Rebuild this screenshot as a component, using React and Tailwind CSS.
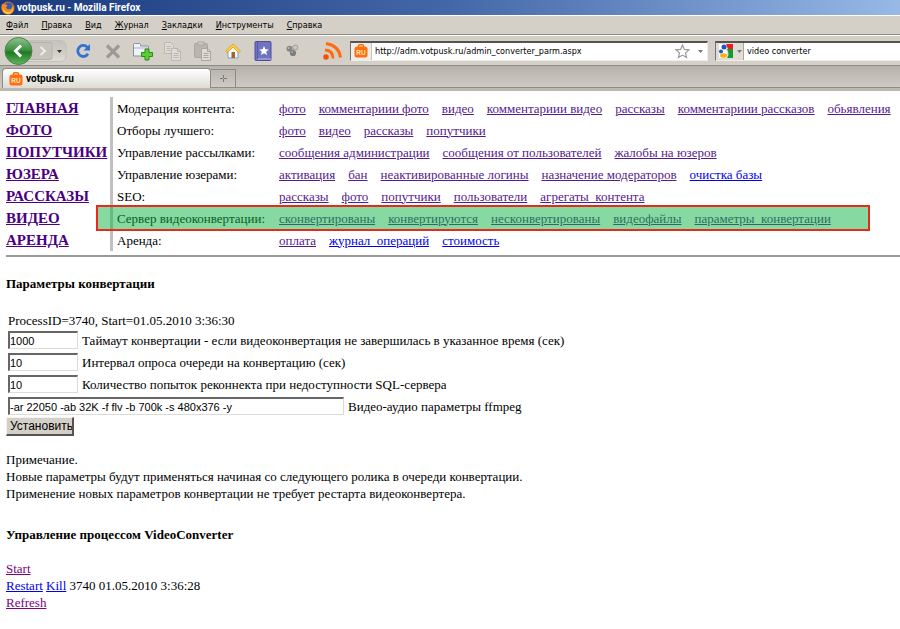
import { useState } from "react";
import clsx from "clsx";

const MENU = ["Файл", "Правка", "Вид", "Журнал", "Закладки", "Инструменты", "Справка"];

const SECTIONS = ["ГЛАВНАЯ", "ФОТО", "ПОПУТЧИКИ", "ЮЗЕРА", "РАССКАЗЫ", "ВИДЕО", "АРЕНДА"];

const ROWS = [
  {
    title: "Модерация контента:",
    links: ["фото", "комментариии фото", "видео", "комментариии видео", "рассказы", "комментариии рассказов", "обьявления"],
  },
  { title: "Отборы лучшего:", links: ["фото", "видео", "рассказы", "попутчики"] },
  {
    title: "Управление рассылками:",
    links: ["сообщения администрации", "сообщения от пользователей", "жалобы на юзеров"],
  },
  {
    title: "Управление юзерами:",
    links: ["активация", "бан", "неактивированные логины", "назначение модераторов", "очистка базы"],
    fresh: ["очистка базы"],
  },
  { title: "SEO:", links: ["рассказы", "фото", "попутчики", "пользователи", "агрегаты_контента"] },
  {
    title: "Сервер видеоконвертации:",
    links: ["сконвертированы", "конвертируются", "несконвертированы", "видеофайлы", "параметры_конвертации"],
    active: true,
  },
  {
    title: "Аренда:",
    links: ["оплата", "журнал_операций", "стоимость"],
    fresh: ["журнал_операций", "стоимость"],
  },
];

const FIELDS = [
  { id: "timeout", value: "1000", label: "Таймаут конвертации - если видеоконвертация не завершилась в указанное время (сек)" },
  { id: "interval", value: "10", label: "Интервал опроса очереди на конвертацию (сек)" },
  { id: "retries", value: "10", label: "Количество попыток реконнекта при недоступности SQL-сервера" },
  { id: "ffmpeg", value: "-ar 22050 -ab 32K -f flv -b 700k -s 480x376 -y", label: "Видео-аудио параметры ffmpeg", wide: true },
];

function FirefoxLogo() {
  return (
    <svg width="14" height="14" viewBox="0 0 14 14" aria-hidden="true">
      <circle cx="7" cy="7" r="6.5" fill="#e8701a" />
      <circle cx="7.6" cy="5.6" r="4.2" fill="#2c5fb8" />
      <path d="M1 3c1 .4 1.500 .4 2.500 .3C5 3.400 6 4 6.800 4.800L5 6c.3 1.800 2 2.800 4 2.200 1.500-.5 2.500-2 2.200-4.200 2 2 2.300 5.200.3 7.400C9 14 4 14 1.800 10.800.3 8.500.2 5.500 1 3z" fill="#f58a1f" />
      <path d="M2 6c.2 3.500 3.200 5.500 6 5 2.200-.4 3.800-2 4-4.500.8 3-1 6-4.300 6.500C4 13.400 1.200 10.500 2 6z" fill="#fcc73a" />
    </svg>
  );
}

function SiteIcon() {
  return (
    <svg width="14" height="14" viewBox="0 0 14 14" aria-hidden="true" className="shrink-0">
      <path d="M4.500 3.500V1.700q0-1 1-1h3q1 0 1 1v1.800" fill="none" stroke="#ff6a00" strokeWidth="1.400" />
      <rect x="0.500" y="2.500" width="13" height="11" rx="2.500" fill="#ff6f0a" />
      <text x="7" y="10.500" textAnchor="middle" fontSize="6.500" fontWeight="bold" fill="#ffe2c8" fontFamily="Liberation Sans, sans-serif">
        RU
      </text>
    </svg>
  );
}

function Caret({ className }) {
  return (
    <svg width="5" height="3" viewBox="0 0 5 3" aria-hidden="true" className={className}>
      <path d="M0 0h5L2.500 3z" fill="currentColor" />
    </svg>
  );
}

function NavButtons() {
  return (
    <svg width="64" height="30" viewBox="0 0 64 30" aria-hidden="true">
      <defs>
        <linearGradient id="back" x1="0" y1="0" x2="0" y2="1">
          <stop offset="0" stopColor="#8fc48d" />
          <stop offset="0.45" stopColor="#3f9342" />
          <stop offset="0.55" stopColor="#1f7a26" />
          <stop offset="1" stopColor="#5fb85a" />
        </linearGradient>
        <linearGradient id="fwd" x1="0" y1="0" x2="0" y2="1">
          <stop offset="0" stopColor="#c4c2bc" />
          <stop offset="0.5" stopColor="#cfccc6" />
          <stop offset="1" stopColor="#e0ddd7" />
        </linearGradient>
      </defs>
      <path d="M16 4.500h40q6 0 6 6v9q0 6-6 6H16z" fill="url(#fwd)" stroke="#c3c0b9" />
      <path d="M26 6.500h20q2 0 2 2v13q0 2-2 2H26z" fill="#c6c3bd" stroke="#b5b2ab" />
      <path d="M36.500 11l4.500 4-4.500 4" fill="none" stroke="#ecebe8" strokeWidth="2.200" />
      <circle cx="14.500" cy="15" r="13.500" fill="url(#back)" stroke="#4d7f4d" />
      <path d="M17 9.500L11.500 15l5.500 5.500" fill="none" stroke="#fff" strokeWidth="3" />
      <path d="M53 14h5l-2.500 3z" fill="#333" />
    </svg>
  );
}

function ToolIcon({ name }) {
  return (
    <svg width="20" height="20" viewBox="0 0 20 20" aria-hidden="true">
      {name === "reload" && (
        <>
          <path d="M14.300 6.200A5.500 5.500 0 1 0 15 12.800" fill="none" stroke="#2f72d4" strokeWidth="2.800" />
          <path d="M17 3v6.500h-6.500z" fill="#2f72d4" />
        </>
      )}
      {name === "stop" && <path d="M4 4.500l12 12M16 4.500l-12 12" stroke="#9b9a97" strokeWidth="3.200" />}
      {name === "newtab" && (
        <>
          <path d="M0.500 3.500q0-1 1-1h5q1 0 1 1v1.500h7q1 0 1 1v9h-15z" fill="#eef3f9" stroke="#8b9199" />
          <path d="M1 6h14v2H1z" fill="#c6d4e6" />
          <path d="M12 8h4v3.500h3.500v4H16V19h-4v-3.500H8.500v-4H12z" fill="#59cf35" stroke="#2d8a1a" />
        </>
      )}
      {name === "copy" && (
        <g fill="#dedbd6" stroke="#bab7b1">
          <path d="M1.500 1.500h6l3 3v8h-9z" />
          <path d="M3.500 5.500h4M3.500 7.500h4M3.500 9.500h4" />
          <path d="M8.500 7.500h6l3 3v9h-9z" />
          <path d="M14.500 7.500v3h3M10.500 12.500h5M10.500 14.500h5M10.500 16.500h5" fill="none" />
        </g>
      )}
      {name === "paste" && (
        <g fill="#b9b6b0" stroke="#a9a6a0">
          <rect x="1.500" y="2.500" width="13" height="14" rx="1" />
          <rect x="5" y="1" width="6" height="3" fill="#d0cdc7" />
          <path d="M8.500 7.500h6l3 3v9h-9z" fill="#dedbd6" />
          <path d="M14.500 7.500v3h3M10.500 12.500h5M10.500 14.500h5M10.500 16.500h5" fill="none" />
        </g>
      )}
      {name === "home" && (
        <>
          <path d="M5 10.500l5-4.500 5 4.500v6.500H5z" fill="#f4f8fd" stroke="#7fa0c8" />
          <path d="M10 3l7.500 7-1.500 1.700-6-5.400-6 5.400L2.500 10z" fill="#ffcf45" stroke="#d69a25" strokeWidth="0.800" />
          <rect x="8.500" y="11" width="3.500" height="6" fill="#a0642c" />
        </>
      )}
      {name === "book" && (
        <>
          <rect x="2" y="0.500" width="16" height="19" rx="1" fill="#7173c0" stroke="#4d4f98" />
          <path d="M4 18h14" stroke="#b9baea" />
          <path d="M4.500 1v17" stroke="#5658a8" />
          <path d="M11 5l1.400 3.200 3.400.3-2.600 2.200.8 3.400-3-1.800-3 1.800.8-3.400-2.600-2.200 3.400-.3z" fill="#fff" />
        </>
      )}
      {name === "balls" && (
        <>
          <circle cx="6.500" cy="7.800" r="3" fill="#858584" />
          <circle cx="10" cy="12" r="3.100" fill="#7c7c7b" />
          <circle cx="12.300" cy="6.500" r="2.500" fill="#c9c9c7" stroke="#9b9b99" />
          <circle cx="5.700" cy="7" r="1" fill="#b9b9b8" />
          <circle cx="9.200" cy="11" r="1" fill="#a9a9a8" />
        </>
      )}
      {name === "rss" && (
        <g fill="none" stroke="#ff6a0c" strokeWidth="3">
          <circle cx="4" cy="16" r="2.800" fill="#f5500a" stroke="none" />
          <path d="M3 9q8 .5 8 8.500" />
          <path d="M4 2.500q13 2 14.500 14" />
        </g>
      )}
    </svg>
  );
}

const TOOLS = [
  ["reload", "Обновить"],
  ["stop", "Остановить"],
  ["newtab", "Новая вкладка"],
  ["copy", "Копировать"],
  ["paste", "Вставить"],
  ["home", "Домой"],
  ["book", "Закладки"],
  ["balls", "Дополнения"],
];

function AddressBar() {
  const [url, setUrl] = useState("http://adm.votpusk.ru/admin_converter_parm.aspx");
  const [query, setQuery] = useState("video converter");
  const box = "flex h-[20px] items-center border border-t-2 border-[#efede8] border-t-[#55534f] border-l-[#77746e] bg-white";
  return (
    <>
      <div className={clsx(box, "min-w-0 flex-1")}>
        <span className="flex h-full w-[21px] items-center justify-center border-r border-[#c8c5be] bg-[#efedea]">
          <SiteIcon />
        </span>
        <input
          aria-label="Адрес"
          value={url}
          onChange={(e) => setUrl(e.target.value)}
          className="min-w-0 flex-1 px-[3px] outline-none"
        />
        <svg width="15" height="15" viewBox="0 0 15 15" aria-hidden="true">
          <path d="M7.500 1l1.900 4.400 4.700.4-3.600 3.100 1.100 4.700-4.100-2.500-4.100 2.500 1.100-4.700L.9 5.800l4.700-.4z" fill="#fff" stroke="#9a9a9a" strokeWidth="1.200" />
        </svg>
        <Caret className="mr-1 ml-2 text-[#777]" />
      </div>
      <div className={clsx(box, "ml-[7px] w-[185px] shrink-0 border-r-0")}>
        <button aria-label="Поисковая система" className="flex h-full w-[28px] items-center gap-1 border-r border-[#aaa69e] bg-[#e0ddd7] pl-[3px]">
          <svg width="14" height="14" viewBox="0 0 14 14" aria-hidden="true">
            <path d="M7 0h7v5H9z" fill="#ee1c1c" />
            <path d="M8 5h6v9H8q3-4 0-9z" fill="#149a34" />
            <path d="M0 0h7l1 14H0z" fill="#fff" />
            <circle cx="5" cy="3" r="2.500" fill="#1f55c8" />
            <circle cx="2" cy="7.500" r="2" fill="#1f55c8" />
            <ellipse cx="4.500" cy="11.500" rx="3.500" ry="2.300" fill="#f5b21e" />
          </svg>
          <Caret className="text-[#777]" />
        </button>
        <input
          aria-label="Поиск"
          value={query}
          onChange={(e) => setQuery(e.target.value)}
          className="min-w-0 flex-1 px-[3px] outline-none"
        />
      </div>
    </>
  );
}

function BrowserChrome() {
  return (
    <header className="bg-[#d4d0c8] font-['DejaVu_Sans_Condensed','DejaVu_Sans',sans-serif] text-[9px] text-black">
      <div className="flex h-[15px] items-center gap-[2px] bg-linear-to-r from-[#1a3a7c] via-[#4467a8] to-[#98b9e6] px-[1px] text-white">
        <FirefoxLogo />
        <span className="font-[Roboto,sans-serif] text-[10px] font-bold">votpusk.ru - Mozilla Firefox</span>
      </div>

      <nav className="flex h-[20px] items-center gap-[13px] border-t border-b border-t-white border-b-[#8f8c86] px-[6px]">
        {MENU.map((item) => (
          <button key={item}>
            <span className="underline">{item[0]}</span>
            {item.slice(1)}
          </button>
        ))}
      </nav>

      <div className="flex h-[31px] items-center border-t border-b border-t-white border-b-[#8f8c86] pl-[4px]">
        <button aria-label="Назад">
          <NavButtons />
        </button>
        <div className="flex">
          {TOOLS.map(([name, label]) => (
            <button key={name} aria-label={label} className="flex w-[30px] justify-center">
              <ToolIcon name={name} />
            </button>
          ))}
        </div>
        <button aria-label="RSS" className="mr-2 ml-[14px]">
          <ToolIcon name="rss" />
        </button>
        <AddressBar />
      </div>

      <div className="flex h-[25px] items-end border-b-[3px] border-[#bdb9b1] bg-linear-to-b from-[#b5b2ab] to-[#d0ccc5] pl-[2px]">
        <div className="flex h-[20px] w-[209px] items-center gap-[3px] rounded-t-sm border border-b-0 border-[#8f8c86] bg-linear-to-b from-white to-[#dedbd5] px-[6px]">
          <SiteIcon />
          <span className="font-[Roboto,sans-serif] text-[10px] font-bold">votpusk.ru</span>
        </div>
        <button aria-label="Открыть вкладку" className="flex h-[19px] w-[25px] items-center justify-center border-t border-r border-b border-[#8f8c86] text-[#777]">
          <svg width="9" height="9" viewBox="0 0 9 9" aria-hidden="true">
            <path d="M4.500 1v3M4.500 5v3M1 4.500h3M5 4.500h3" stroke="currentColor" />
          </svg>
        </button>
        <div className="flex-1 border-b border-[#8f8c86]" />
      </div>
    </header>
  );
}

function AdminMenu() {
  return (
    <div className="flex border-b-2 border-[#999] pb-1">
      <ul className="w-[104px] shrink-0 text-[15px] font-bold text-[#4b0082]">
        {SECTIONS.map((s) => (
          <li key={s} className="h-[22px] leading-[22px]">
            <a href="#" className="underline">{s}</a>
          </li>
        ))}
      </ul>
      <div className="min-w-0 flex-1 border-l-[3px] border-[#c0c0c0]">
        {ROWS.map((row) => (
          <div key={row.title} className="relative flex h-[22px] items-center pl-1 whitespace-nowrap">
            <span className="w-[162px] shrink-0">{row.title}</span>
            <div className="flex gap-[13px]">
              {row.links.map((link) => (
                <a
                  key={link}
                  href="#"
                  className={clsx("underline", row.fresh?.includes(link) ? "text-[#0000ee]" : "text-[#551a8b]")}
                >
                  {link}
                </a>
              ))}
            </div>
            {row.active && (
              <div className="pointer-events-none absolute -inset-y-[2px] right-[30px] -left-[17px] border-2 border-[#e8291c] bg-[#0db341]/50" />
            )}
          </div>
        ))}
      </div>
    </div>
  );
}

function Field({ id, value: initial, label, wide }) {
  const [value, setValue] = useState(initial);
  return (
    <div className="flex h-[22px] items-center gap-1 pl-[2px]">
      <input
        id={id}
        value={value}
        onChange={(e) => setValue(e.target.value)}
        className={clsx(
          "h-[18px] border border-t-2 border-l-2 border-[#dedbd5] border-t-[#666] border-l-[#666] bg-white font-['Liberation_Sans',sans-serif] text-[11px] outline-none",
          wide ? "w-[336px]" : "w-[70px]"
        )}
      />
      <label htmlFor={id}>{label}</label>
    </div>
  );
}

export default function App() {
  return (
    <div className="min-h-screen overflow-hidden bg-white font-['Liberation_Serif',serif] text-[13px] leading-[17px] text-black">
      <BrowserChrome />
      <main className="pt-[6px] pl-[6px]">
        <AdminMenu />

        <h1 className="mt-[18px] font-bold">Параметры конвертации</h1>
        <form className="mt-5" onSubmit={(e) => e.preventDefault()}>
          <p className="pl-[2px]">ProcessID=3740, Start=01.05.2010 3:36:30</p>
          {FIELDS.map((f) => (
            <Field key={f.id} {...f} />
          ))}
          <button className="h-[19px] w-[68px] overflow-hidden border border-r-2 border-b-2 border-[#f4f2ee] border-r-[#55534f] border-b-[#55534f] bg-[#d4d0c8] pl-[3px] text-left font-['Liberation_Sans',sans-serif] text-[12px] leading-4 whitespace-nowrap">
            Установить
          </button>
        </form>

        <p className="mt-[15px]">
          Примечание.
          <br />
          Новые параметры будут применяться начиная со следующего ролика в очереди конвертации.
          <br />
          Применение новых параметров конвертации не требует рестарта видеоконвертера.
        </p>

        <h2 className="mt-6 font-bold">Управление процессом VideoConverter</h2>
        <div className="mt-[17px]">
          <a href="#" className="text-[#800080] underline">Start</a>
          <p>
            <a href="#" className="text-[#0000ee] underline">Restart</a>{" "}
            <a href="#" className="text-[#0000ee] underline">Kill</a> 3740 01.05.2010 3:36:28
          </p>
          <a href="#" className="text-[#800080] underline">Refresh</a>
        </div>
      </main>
    </div>
  );
}
